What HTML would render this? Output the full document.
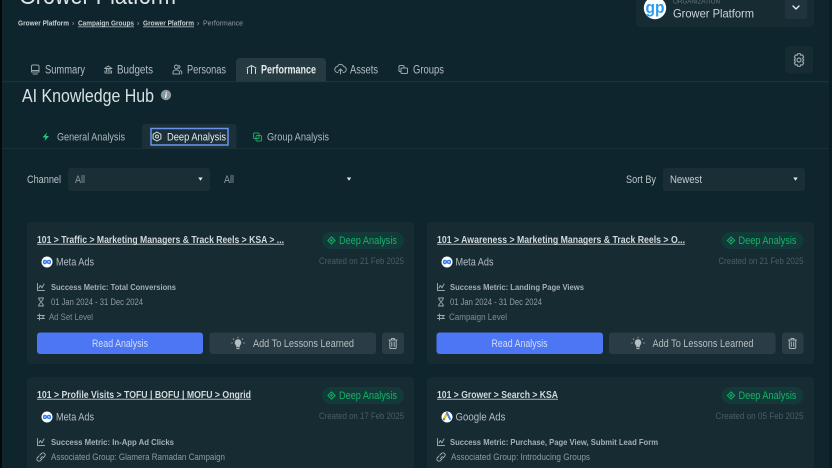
<!DOCTYPE html>
<html><head><meta charset="utf-8"><title>AI Knowledge Hub</title>
<style>
html,body{margin:0;padding:0;background:#0e252d;width:832px;height:468px;overflow:hidden}
svg{display:block;filter:blur(.3px)}
text{font-family:"Liberation Sans",sans-serif}
.ic{fill:none;stroke:#9aa7ab;stroke-width:1;stroke-linecap:round;stroke-linejoin:round}
.b{font-weight:700}
</style></head><body>
<svg width="832" height="468" viewBox="0 0 832 468" xmlns="http://www.w3.org/2000/svg">
<defs>
<g id="pillic" fill="none" stroke="#17b26a"><path d="M0-3.600 3.600 0 0 3.600-3.600 0Z" stroke-width="1"/><circle r="1.200" fill="#17b26a" stroke="none"/></g>
<g id="metric" class="ic"><path d="M-3.500-3.500V3.500H3.500M-2 1-.7-1.500 1 .8 3-3"/></g>
<g id="glass" class="ic"><path d="M-2.500-4H2.500M-2.500 4H2.500M-2-4V-2.500L2 2.500V4M2-4V-2.500L-2 2.500V4"/></g>
<g id="level" class="ic"><path d="M-3.500-1.500H3.500M-3.500 1.500H3.500M-1.500-3V3M2-1.500V1.500"/></g>
<g id="link" class="ic"><path d="M-.5 1.500 1.500-.5M-1-2 .5-3.500A2 2 0 0 1 3.500-.5L2 1M1 2-.5 3.500A2 2 0 0 1-3.500.5L-2-1"/></g>
<g id="meta"><circle r="5.500" fill="#fff"/><path d="M-.2 0C-1.200-2-3.400-2.200-3.400.2-3.400 2-1.500 1.800-.2 0 1 -1.800 3.400-2.200 3.400.2 3.400 2 1.200 1.800-.2 0Z" fill="none" stroke="#2f7cf6" stroke-width="1.500"/></g>
<g id="bulb" fill="none" stroke="#b5bfc2" stroke-linecap="round"><path d="M-1.500 3V1.500C-4-.5-3-4.500 0-4.500S4-.5 1.500 1.500V3Z" fill="#b5bfc2" stroke-width=".6"/><path d="M-1.200 4.600H1.200" stroke-width="1"/><path d="M-6.500-1H-5.500M5.500-1H6.500M-4.800-5.200-4.200-4.500M4.800-5.200 4.200-4.500M0-7V-6.200" stroke-width=".8"/></g>
<g id="trash" class="ic" style="stroke:#a9b4b8"><path d="M-4-3.500H4M-1.500-3.500V-5H1.500V-3.500M-3.200-3.500V4A1.200 1.200 0 0 0-2 5H2A1.200 1.200 0 0 0 3.200 4V-3.500M-1.200-1.500V3M1.200-1.500V3"/></g>
<path id="arrow" d="M-2.200-1.500H2.200L0 1.700Z" fill="#e6ebec"/>
</defs>
<rect width="832" height="468" fill="#0e252d"/>
<rect x="0" width="2" height="468" fill="#06090b"/>
<rect x="829" width="3" height="468" fill="#0b1d24"/>

<!-- header -->
<text x="19" y="4" font-size="25" fill="#dfe5e7" textLength="157" lengthAdjust="spacingAndGlyphs">Grower Platform</text>
<g font-size="7.500" fill="#c7d0d3" class="b">
<text x="18" y="25.500" textLength="51" lengthAdjust="spacingAndGlyphs">Grower Platform</text>
<text x="78" y="25.500" textLength="56" lengthAdjust="spacingAndGlyphs">Campaign Groups</text>
<text x="143" y="25.500" textLength="51" lengthAdjust="spacingAndGlyphs">Grower Platform</text>
</g>
<rect x="78" y="26.500" width="56" height=".7" fill="#c7d0d3"/>
<rect x="143" y="26.500" width="51" height=".7" fill="#c7d0d3"/>
<g font-size="7" fill="#aab5b9"><text x="72" y="25.500">›</text><text x="137" y="25.500">›</text><text x="197" y="25.500">›</text></g>
<text x="203" y="25.500" font-size="7.500" fill="#8f9da2" textLength="40" lengthAdjust="spacingAndGlyphs">Performance</text>

<!-- org -->
<rect x="636" y="-10" width="178" height="37" rx="4" fill="#172b33"/>
<circle cx="655" cy="8" r="11.200" fill="#fff"/>
<text x="645.500" y="13" font-size="17" class="b" fill="#2f9cf2" textLength="19" lengthAdjust="spacingAndGlyphs">gp</text>
<text x="673" y="3.500" font-size="6" fill="#65757b" textLength="47" lengthAdjust="spacingAndGlyphs">ORGANIZATION</text>
<text x="673" y="17.500" font-size="12" fill="#ccd5d8" textLength="81" lengthAdjust="spacingAndGlyphs">Grower Platform</text>
<rect x="785" y="-6" width="22" height="25" rx="3" fill="#1f343c"/>
<path d="M793 6 796 9 799 6" fill="none" stroke="#e6ebec" stroke-width="1.400" stroke-linecap="round" stroke-linejoin="round"/>
<rect x="785" y="46" width="28" height="27.500" rx="4" fill="#172b33"/>
<path d="M797.800 53.700H800.200L800.800 55.300 802.500 55 803.700 57 802.600 58.400 803.700 60 802.600 61.600 803.700 63 802.500 65 800.800 64.700 800.200 66.300H797.800L797.200 64.700 795.500 65 794.300 63 795.400 61.600 794.300 60 795.400 58.400 794.300 57 795.500 55 797.200 55.300Z" fill="none" stroke="#98a5aa" stroke-width="1.200" stroke-linejoin="round"/>
<circle cx="799" cy="60" r="2" fill="none" stroke="#98a5aa" stroke-width="1.200"/>

<!-- nav tabs -->
<rect x="2" y="81" width="827" height="1.200" fill="#1c323a"/>
<path d="M236 81.500V62a4 4 0 0 1 4-4H322a4 4 0 0 1 4 4V81.500Z" fill="#263a42"/>
<g font-size="11.500" fill="#b4bfc3">
<text x="45" y="73.500" textLength="40" lengthAdjust="spacingAndGlyphs">Summary</text>
<text x="117" y="73.500" textLength="36" lengthAdjust="spacingAndGlyphs">Budgets</text>
<text x="187" y="73.500" textLength="39" lengthAdjust="spacingAndGlyphs">Personas</text>
<text x="350" y="73.500" textLength="28" lengthAdjust="spacingAndGlyphs">Assets</text>
<text x="413" y="73.500" textLength="31" lengthAdjust="spacingAndGlyphs">Groups</text>
</g>
<text x="261" y="73.500" font-size="11.500" fill="#e6ebec" class="b" textLength="55" lengthAdjust="spacingAndGlyphs">Performance</text>
<g class="ic">
<path d="M31.500 66.500a1.500 1.500 0 0 1 1.500-1.500h4.500A1.500 1.500 0 0 1 39 66.500V72H31.500ZM31.500 70.500H39M33 74H37.500"/>
<path d="M105 71V73H111.500V71M104.500 68.500 108.200 66 112 68.500ZM106.500 69V71.500M108.200 69V71.500M110 69V71.500"/>
<path d="M173 74V72.500A2.500 2.500 0 0 1 175.500 70H177A2.500 2.500 0 0 1 179.500 72.500V74ZM176.300 68.800A1.900 1.900 0 1 0 176.300 65 1.900 1.900 0 0 0 176.300 68.800ZM179 65.500A1.700 1.700 0 0 1 179 68.500M180.500 70.500A2.500 2.500 0 0 1 181.500 74"/>
<path d="M247.500 73.500V69M251.500 73.500V67M255.500 73.500V69M247 68 251.500 65.500 256 68" style="stroke:#d8dfe1"/>
<path d="M340.500 74V69M338.500 71 340.500 69 342.500 71M338 72.500A3 3 0 0 1 337.500 66.500 3.200 3.200 0 0 1 343.500 66.500 3 3 0 0 1 343 72.500"/>
<path d="M402 73.500H406.500A1 1 0 0 0 407.500 72.500V69A1 1 0 0 0 406.500 68H402A1 1 0 0 0 401 69V72.500A1 1 0 0 0 402 73.500ZM404 68V66.500A1 1 0 0 0 403 65.500H400A1 1 0 0 0 399 66.500V70A1 1 0 0 0 401 71"/>
</g>

<!-- heading -->
<text x="22" y="102" font-size="18" fill="#d9e0e2" textLength="132" lengthAdjust="spacingAndGlyphs">AI Knowledge Hub</text>
<circle cx="166" cy="95" r="5.200" fill="#8a979c"/>
<text x="164.700" y="98" font-size="8" fill="#fff" class="b" font-style="italic">i</text>

<!-- sub tabs -->
<rect x="2" y="148" width="827" height="1" fill="#1a3038"/>
<path d="M142 148.500V127a3 3 0 0 1 3-3H233.500a3 3 0 0 1 3 3V148.500Z" fill="#1b3038"/>
<rect x="151" y="128.500" width="77" height="16.500" fill="none" stroke="#6a94ea" stroke-width="1.500"/>
<path d="M47 132.500 42.500 137.500H45.500L44.500 141 49 136H46Z" fill="#17d27a"/>
<text x="57" y="140.500" font-size="11" fill="#adb8bc" textLength="68" lengthAdjust="spacingAndGlyphs">General Analysis</text>
<path d="M157 132 160.900 134.300V138.700L157 141 153.100 138.700V134.300Z" fill="none" stroke="#d5dcde"/>
<circle cx="157" cy="136.500" r="1.500" fill="none" stroke="#d5dcde"/>
<text x="167" y="140.500" font-size="11" fill="#e8eced" textLength="59" lengthAdjust="spacingAndGlyphs">Deep Analysis</text>
<g fill="none" stroke="#17a862" stroke-width="1"><rect x="253.500" y="133" width="5.500" height="5.500" rx="1"/><rect x="256" y="135.500" width="5.500" height="5.500" rx="1"/></g>
<text x="267" y="140.500" font-size="11" fill="#adb8bc" textLength="62" lengthAdjust="spacingAndGlyphs">Group Analysis</text>

<!-- filters -->
<text x="27" y="183" font-size="11" fill="#bcc6c9" textLength="34" lengthAdjust="spacingAndGlyphs">Channel</text>
<rect x="68" y="168" width="142" height="23" rx="3" fill="#1a2e36"/>
<text x="75" y="183" font-size="11" fill="#8b999e" textLength="10" lengthAdjust="spacingAndGlyphs">All</text>
<use href="#arrow" x="200.500" y="179"/>
<text x="224" y="183" font-size="11" fill="#8b999e" textLength="10" lengthAdjust="spacingAndGlyphs">All</text>
<use href="#arrow" x="349" y="179"/>
<text x="626" y="183" font-size="11" fill="#bcc6c9" textLength="30" lengthAdjust="spacingAndGlyphs">Sort By</text>
<rect x="663" y="168" width="142" height="23" rx="3" fill="#1a2e36"/>
<text x="670" y="183" font-size="11" fill="#c3ccd0" textLength="32" lengthAdjust="spacingAndGlyphs">Newest</text>
<use href="#arrow" x="795.500" y="179"/>

<!-- Card 1 -->
<rect x="27" y="222" width="387" height="142" rx="4" fill="#172b33"/>
<text x="37" y="243" font-size="10.500" class="b" fill="#d3dadd" textLength="247" lengthAdjust="spacingAndGlyphs">101 &gt; Traffic &gt; Marketing Managers &amp; Track Reels &gt; KSA &gt; ...</text>
<rect x="37" y="243.800" width="247" height=".8" fill="#d3dadd"/>
<rect x="322" y="232" width="82" height="17" rx="8.500" fill="#123a38"/>
<use href="#pillic" x="331.500" y="240.500"/>
<text x="339" y="244" font-size="11" fill="#17b26a" textLength="58" lengthAdjust="spacingAndGlyphs">Deep Analysis</text>
<use href="#meta" x="47" y="262"/>
<text x="56" y="265.500" font-size="11" fill="#b3bdc1" textLength="38" lengthAdjust="spacingAndGlyphs">Meta Ads</text>
<text x="319" y="264" font-size="9" fill="#4c5d64" textLength="85" lengthAdjust="spacingAndGlyphs">Created on 21 Feb 2025</text>
<use href="#metric" x="41" y="287"/>
<text x="51" y="290" font-size="8.500" class="b" fill="#a5b0b4" textLength="125" lengthAdjust="spacingAndGlyphs">Success Metric: Total Conversions</text>
<use href="#glass" x="41" y="302"/>
<text x="51" y="305" font-size="9" fill="#8f9ca1" textLength="92" lengthAdjust="spacingAndGlyphs">01 Jan 2024 - 31 Dec 2024</text>
<use href="#level" x="41" y="317"/>
<text x="49" y="320" font-size="9" fill="#7f8d92" textLength="44" lengthAdjust="spacingAndGlyphs">Ad Set Level</text>
<rect x="37" y="332.500" width="166" height="21.500" rx="3" fill="#4d76f5"/>
<text x="92" y="347" font-size="11" fill="#d3ddfc" textLength="56" lengthAdjust="spacingAndGlyphs">Read Analysis</text>
<rect x="209.500" y="332.500" width="166.500" height="21.500" rx="3" fill="#2a3c45"/>
<use href="#bulb" x="238" y="344"/>
<text x="253" y="347" font-size="11" fill="#b5bfc2" textLength="101" lengthAdjust="spacingAndGlyphs">Add To Lessons Learned</text>
<rect x="382" y="332.500" width="22" height="21.500" rx="3" fill="#2a3c45"/>
<use href="#trash" x="393" y="343.500"/>

<!-- Card 2 -->
<rect x="427" y="222" width="387" height="142" rx="4" fill="#172b33"/>
<text x="437" y="243" font-size="10.500" class="b" fill="#d3dadd" textLength="248" lengthAdjust="spacingAndGlyphs">101 &gt; Awareness &gt; Marketing Managers &amp; Track Reels &gt; O...</text>
<rect x="437" y="243.800" width="248" height=".8" fill="#d3dadd"/>
<rect x="721.500" y="232" width="82" height="17" rx="8.500" fill="#123a38"/>
<use href="#pillic" x="731" y="240.500"/>
<text x="738.500" y="244" font-size="11" fill="#17b26a" textLength="58" lengthAdjust="spacingAndGlyphs">Deep Analysis</text>
<use href="#meta" x="447" y="262"/>
<text x="455.500" y="265.500" font-size="11" fill="#b3bdc1" textLength="38" lengthAdjust="spacingAndGlyphs">Meta Ads</text>
<text x="718.500" y="264" font-size="9" fill="#4c5d64" textLength="85" lengthAdjust="spacingAndGlyphs">Created on 21 Feb 2025</text>
<use href="#metric" x="441" y="287"/>
<text x="450" y="290" font-size="8.500" class="b" fill="#a5b0b4" textLength="134" lengthAdjust="spacingAndGlyphs">Success Metric: Landing Page Views</text>
<use href="#glass" x="441" y="302"/>
<text x="450" y="305" font-size="9" fill="#8f9ca1" textLength="92" lengthAdjust="spacingAndGlyphs">01 Jan 2024 - 31 Dec 2024</text>
<use href="#level" x="441" y="317"/>
<text x="449" y="320" font-size="9" fill="#7f8d92" textLength="58" lengthAdjust="spacingAndGlyphs">Campaign Level</text>
<rect x="436.500" y="332.500" width="166.500" height="21.500" rx="3" fill="#4d76f5"/>
<text x="491.500" y="347" font-size="11" fill="#d3ddfc" textLength="56" lengthAdjust="spacingAndGlyphs">Read Analysis</text>
<rect x="609" y="332.500" width="166.500" height="21.500" rx="3" fill="#2a3c45"/>
<use href="#bulb" x="638" y="344"/>
<text x="652.500" y="347" font-size="11" fill="#b5bfc2" textLength="101" lengthAdjust="spacingAndGlyphs">Add To Lessons Learned</text>
<rect x="782" y="332.500" width="21.500" height="21.500" rx="3" fill="#2a3c45"/>
<use href="#trash" x="792.500" y="343.500"/>

<!-- Card 3 -->
<rect x="27" y="377" width="387" height="100" rx="4" fill="#172b33"/>
<text x="37" y="398" font-size="10.500" class="b" fill="#d3dadd" textLength="214" lengthAdjust="spacingAndGlyphs">101 &gt; Profile Visits &gt; TOFU | BOFU | MOFU &gt; Ongrid</text>
<rect x="37" y="398.800" width="214" height=".8" fill="#d3dadd"/>
<rect x="322" y="387" width="82" height="17" rx="8.500" fill="#123a38"/>
<use href="#pillic" x="331.500" y="395.500"/>
<text x="339" y="399" font-size="11" fill="#17b26a" textLength="58" lengthAdjust="spacingAndGlyphs">Deep Analysis</text>
<use href="#meta" x="47" y="417"/>
<text x="56" y="420.500" font-size="11" fill="#b3bdc1" textLength="38" lengthAdjust="spacingAndGlyphs">Meta Ads</text>
<text x="319" y="419" font-size="9" fill="#4c5d64" textLength="85" lengthAdjust="spacingAndGlyphs">Created on 17 Feb 2025</text>
<use href="#metric" x="41" y="442"/>
<text x="51" y="445" font-size="8.500" class="b" fill="#a5b0b4" textLength="123" lengthAdjust="spacingAndGlyphs">Success Metric: In-App Ad Clicks</text>
<use href="#link" x="41" y="457"/>
<text x="51" y="460" font-size="9" fill="#8f9ca1" textLength="174" lengthAdjust="spacingAndGlyphs">Associated Group: Glamera Ramadan Campaign</text>

<!-- Card 4 -->
<rect x="427" y="377" width="387" height="100" rx="4" fill="#172b33"/>
<text x="437" y="398" font-size="10.500" class="b" fill="#d3dadd" textLength="121" lengthAdjust="spacingAndGlyphs">101 &gt; Grower &gt; Search &gt; KSA</text>
<rect x="437" y="398.800" width="121" height=".8" fill="#d3dadd"/>
<rect x="721.500" y="387" width="82" height="17" rx="8.500" fill="#123a38"/>
<use href="#pillic" x="731" y="395.500"/>
<text x="738.500" y="399" font-size="11" fill="#17b26a" textLength="58" lengthAdjust="spacingAndGlyphs">Deep Analysis</text>
<circle cx="447" cy="417" r="5.500" fill="#fff"/>
<path d="M447 413 444 419" stroke="#fbbc04" stroke-width="2" stroke-linecap="round"/>
<path d="M447 413 450 419" stroke="#3b82f0" stroke-width="2" stroke-linecap="round"/>
<circle cx="444" cy="419.300" r="1.200" fill="#34a853"/>
<text x="455.500" y="420.500" font-size="11" fill="#b3bdc1" textLength="50" lengthAdjust="spacingAndGlyphs">Google Ads</text>
<text x="715.500" y="419" font-size="9" fill="#4c5d64" textLength="88" lengthAdjust="spacingAndGlyphs">Created on 05 Feb 2025</text>
<use href="#metric" x="441" y="442"/>
<text x="450" y="445" font-size="8.500" class="b" fill="#a5b0b4" textLength="208" lengthAdjust="spacingAndGlyphs">Success Metric: Purchase, Page View, Submit Lead Form</text>
<use href="#link" x="441" y="457"/>
<text x="451" y="460" font-size="9" fill="#8f9ca1" textLength="139" lengthAdjust="spacingAndGlyphs">Associated Group: Introducing Groups</text>
</svg>
</body></html>
